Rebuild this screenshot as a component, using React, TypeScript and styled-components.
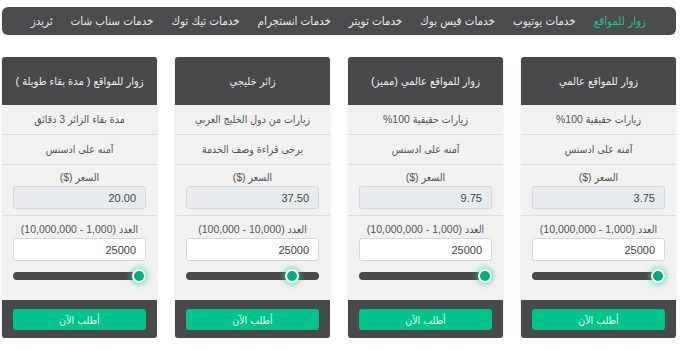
import React from "react";
import styled, { createGlobalStyle } from "styled-components";

const Global = createGlobalStyle`
  html, body { margin: 0; padding: 0; background: #ffffff; }
  body {
    font-family: "Liberation Sans", "DejaVu Sans Condensed", "DejaVu Sans", sans-serif;
    direction: rtl;
  }
  * { box-sizing: border-box; }
`;

const Page = styled.div`
  width: 682px;
  padding: 7px 6px 0 2px;
`;

const Nav = styled.nav`
  height: 28px;
  background: #4a4b4d;
  border-radius: 6px;
  display: flex;
  align-items: center;
  padding: 0 30px 0 0;
  gap: 18px;
`;

const NavItem = styled.a<{ $active?: boolean }>`
  font-size: 11.5px;
  color: ${(p) => (p.$active ? "#1fc18f" : "#e8e8e8")};
  text-decoration: none;
  white-space: nowrap;
`;

const Cards = styled.div`
  display: grid;
  grid-template-columns: repeat(4, 155px);
  column-gap: 18px;
  margin-top: 22px;
`;

const Card = styled.div`
  background: #f1f1f1;
  border-radius: 3px;
  overflow: hidden;
  box-shadow: 0 1px 2px rgba(0, 0, 0, 0.18);
  display: flex;
  flex-direction: column;
`;

const Header = styled.div`
  height: 48px;
  background: #48494b;
  color: #ececec;
  font-size: 11px;
  display: flex;
  align-items: center;
  justify-content: center;
  text-align: center;
`;

const Row = styled.div`
  height: 30px;
  display: flex;
  align-items: center;
  justify-content: center;
  font-size: 10.5px;
  color: #555;
  border-bottom: 1px solid #dcdcdc;
  padding-bottom: 2px;
`;

const Section = styled.div<{ $last?: boolean }>`
  padding: ${(p) => (p.$last ? "7px 11px 0" : "6px 11px 6px")};
  display: flex;
  flex-direction: column;
  align-items: stretch;
  border-bottom: ${(p) => (p.$last ? "none" : "1px solid #dcdcdc")};
  height: ${(p) => (p.$last ? "84px" : "51px")};
`;

const Label = styled.div`
  text-align: center;
  font-size: 10.5px;
  color: #555;
  margin-bottom: 3px;
  direction: rtl;
`;

const Field = styled.div<{ $disabled?: boolean }>`
  height: 23px;
  border: 1px solid ${(p) => (p.$disabled ? "#d3d8dd" : "#d6d6d6")};
  border-radius: 3px;
  background: ${(p) => (p.$disabled ? "#e8ebee" : "#ffffff")};
  font-size: 11px;
  color: #444;
  display: flex;
  align-items: center;
  padding: 0 9px;
`;

const SliderWrap = styled.div`
  position: relative;
  height: 16px;
  margin-top: 7px;
  display: flex;
  align-items: center;
`;

const Track = styled.div`
  width: 100%;
  height: 8px;
  border-radius: 4px;
  background: #4a4a4a;
`;

const Thumb = styled.div`
  position: absolute;
  top: 1px;
  width: 14px;
  height: 14px;
  margin-left: -7px;
  border-radius: 50%;
  background: #00ad7e;
  border: 2px solid #ffffff;
  box-shadow: 0 0 5px 2px rgba(40, 210, 160, 0.55);
`;

const Footer = styled.div`
  background: #48494b;
  padding: 9px 11px 7px;
  height: 38px;
`;

const Button = styled.button`
  width: 100%;
  height: 21px;
  border: none;
  border-radius: 3px;
  background: #00c48c;
  color: #e6f7ef;
  font-family: "DejaVu Sans Condensed", "DejaVu Sans", sans-serif;
  font-size: 10.5px;
  padding: 0;
`;

type Plan = {
  title: string;
  feature: string;
  note: string;
  price: string;
  range: string;
  min: number;
  max: number;
  value: number;
};

const plans: Plan[] = [
  {
    title: "زوار للمواقع عالمي",
    feature: "زيارات حقيقية 100%",
    note: "آمنه على ادسنس",
    price: "3.75",
    range: "(1,000 - 10,000,000)",
    min: 1000,
    max: 10000000,
    value: 25000,
  },
  {
    title: "زوار للمواقع عالمي (مميز)",
    feature: "زيارات حقيقية 100%",
    note: "آمنه على ادسنس",
    price: "9.75",
    range: "(1,000 - 10,000,000)",
    min: 1000,
    max: 10000000,
    value: 25000,
  },
  {
    title: "زائر خليجي",
    feature: "زيارات من دول الخليج العربي",
    note: "يرجى قراءة وصف الخدمة",
    price: "37.50",
    range: "(10,000 - 100,000)",
    min: 10000,
    max: 100000,
    value: 25000,
  },
  {
    title: "زوار للمواقع ( مدة بقاء طويلة )",
    feature: "مدة بقاء الزائر 3 دقائق",
    note: "آمنه على ادسنس",
    price: "20.00",
    range: "(1,000 - 10,000,000)",
    min: 1000,
    max: 10000000,
    value: 25000,
  },
];

const navItems = [
  "زوار للمواقع",
  "خدمات يوتيوب",
  "خدمات فيس بوك",
  "خدمات تويتر",
  "خدمات انستجرام",
  "خدمات تيك توك",
  "خدمات سناب شات",
  "ثريدز",
];

const Slider: React.FC<{ min: number; max: number; value: number }> = ({ min, max, value }) => {
  const frac = (value - min) / (max - min);
  // RTL: min at right
  const trackW = 133;
  const left = 7 + (1 - frac) * (trackW - 14);
  return (
    <SliderWrap>
      <Track />
      <Thumb style={{ left: `${left}px` }} />
    </SliderWrap>
  );
};

export default function App() {
  return (
    <Page>
      <Global />
      <Nav>
        {navItems.map((n, i) => (
          <NavItem key={n} $active={i === 0}>
            {n}
          </NavItem>
        ))}
      </Nav>
      <Cards>
        {plans.map((p) => (
          <Card key={p.title}>
            <Header>{p.title}</Header>
            <Row>{p.feature}</Row>
            <Row>{p.note}</Row>
            <Section>
              <Label>السعر ($)</Label>
              <Field $disabled>{p.price}</Field>
            </Section>
            <Section $last>
              <Label>العدد {p.range}</Label>
              <Field>{p.value}</Field>
              <Slider min={p.min} max={p.max} value={p.value} />
            </Section>
            <Footer>
              <Button>أطلب الآن</Button>
            </Footer>
          </Card>
        ))}
      </Cards>
    </Page>
  );
}
